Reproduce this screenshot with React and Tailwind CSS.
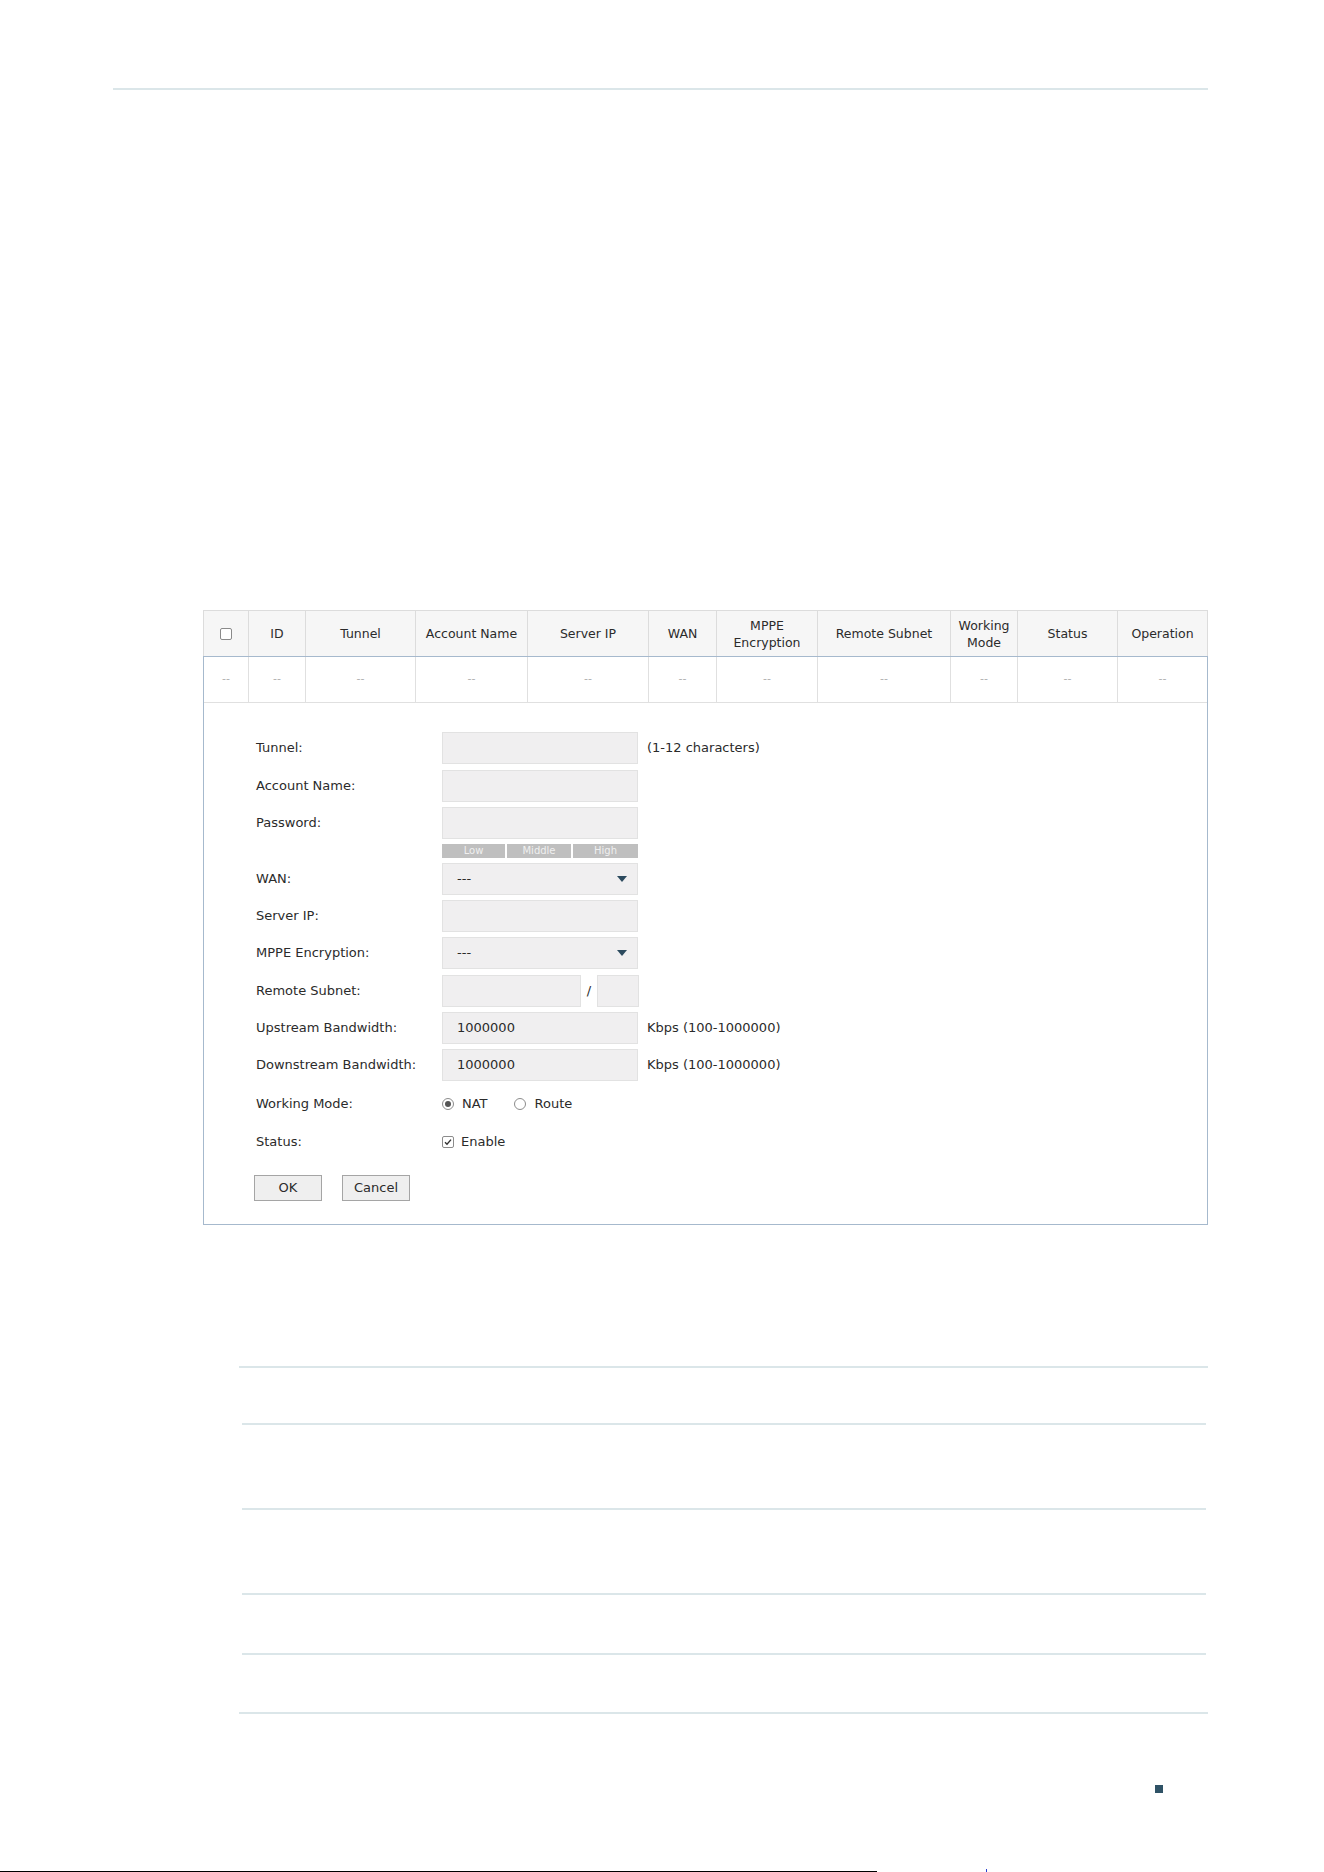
import React from 'react';

const font = "font-['DejaVu_Sans','Liberation_Sans',sans-serif]";

const headCells = [
  { w: 'w-[45px]', label: null },
  { w: 'w-[57px]', label: 'ID' },
  { w: 'w-[110px]', label: 'Tunnel' },
  { w: 'w-[112px]', label: 'Account Name' },
  { w: 'w-[121px]', label: 'Server IP' },
  { w: 'w-[68px]', label: 'WAN' },
  { w: 'w-[101px]', label: ['MPPE', 'Encryption'] },
  { w: 'w-[133px]', label: 'Remote Subnet' },
  { w: 'w-[67px]', label: ['Working', 'Mode'] },
  { w: 'w-[100px]', label: 'Status' },
  { w: 'flex-1', label: 'Operation' },
];

const Box = ({ className = 'w-[196px]', children }) => (
  <div className={`h-[32px] border border-[#e2e2e2] bg-[#f0eff0] flex items-center ${className}`}>
    {children}
  </div>
);

const Select = () => (
  <Box>
    <span className="pl-[14px] flex-1 text-[#2b2b2b]">---</span>
    <svg width="10" height="6" viewBox="0 0 10 6" className="mr-[10px]">
      <path d="M0 0h10L5 6z" fill="#2c4a5e" />
    </svg>
  </Box>
);

const Row = ({ label, top, children }) => (
  <div className={`flex items-center h-[32px] ${top}`}>
    <div className="w-[186px] text-[#2b2b2b]">{label}</div>
    {children}
  </div>
);

const Radio = ({ on }) => (
  <span className="w-[12px] h-[12px] rounded-full border border-[#8c8c8c] bg-white flex items-center justify-center">
    {on && <span className="w-[6px] h-[6px] rounded-full bg-[#555]" />}
  </span>
);

const Btn = ({ children }) => (
  <button className="w-[68px] h-[26px] border border-[#a5a5a5] bg-[#efefef] text-[#2b2b2b]">{children}</button>
);

const Rule = ({ className }) => <div className={`h-[2px] bg-[#dbe6e9] ${className}`} />;

export default function App() {
  return (
    <div className={`relative w-[1324px] h-[1872px] bg-white flex flex-col ${font}`}>
      <Rule className="mt-[88px] ml-[113px] w-[1095px]" />

      {/* tunnel list */}
      <div className="mt-[520px] ml-[203px] w-[1005px]">
        <div className="flex h-[46px] border border-b-0 border-[#dcdcdc] bg-[#f6f6f6] text-[12.5px] text-[#2b2b2b] leading-[17px]">
          {headCells.map((c, i) => (
            <div
              key={i}
              className={`${c.w} flex flex-col items-center justify-center text-center ${i < headCells.length - 1 ? 'border-r border-[#dcdcdc]' : ''}`}
            >
              {c.label === null ? (
                <span className="w-[12px] h-[12px] border border-[#8a8a8a] rounded-[2px] bg-white" />
              ) : Array.isArray(c.label) ? (
                c.label.map((l) => <span key={l}>{l}</span>)
              ) : (
                c.label
              )}
            </div>
          ))}
        </div>

        <div className="border border-[#a6b9cd]">
          <div className="flex h-[46px] border-b border-[#e0e0e0] text-[11px] text-[#b0b0b0]">
            {headCells.map((c, i) => (
              <div
                key={i}
                className={`${c.w} flex items-center justify-center ${i < headCells.length - 1 ? 'border-r border-[#e0e0e0]' : ''}`}
              >
                --
              </div>
            ))}
          </div>

          {/* add / edit form */}
          <div className="pt-[29px] pb-[23px] pl-[52px] text-[13px]">
            <Row label="Tunnel:" top="mt-0">
              <Box />
              <span className="ml-[9px] text-[#2b2b2b]">(1-12 characters)</span>
            </Row>
            <Row label="Account Name:" top="mt-[6px]">
              <Box />
            </Row>
            <Row label="Password:" top="mt-[5px]">
              <Box />
            </Row>
            <div className="flex mt-[5px]">
              <div className="w-[186px]" />
              <div className="flex w-[196px] h-[14px] gap-[2px] text-[10px] leading-[14px] text-[#f0f0f0]">
                <span className="w-[63px] bg-[#bfbfbf] text-center">Low</span>
                <span className="w-[64px] bg-[#bfbfbf] text-center">Middle</span>
                <span className="flex-1 bg-[#bfbfbf] text-center">High</span>
              </div>
            </div>
            <Row label="WAN:" top="mt-[5px]">
              <Select />
            </Row>
            <Row label="Server IP:" top="mt-[5px]">
              <Box />
            </Row>
            <Row label="MPPE Encryption:" top="mt-[5px]">
              <Select />
            </Row>
            <Row label="Remote Subnet:" top="mt-[6px]">
              <Box className="w-[139px]" />
              <span className="w-[16px] text-center text-[#2b2b2b]">/</span>
              <Box className="w-[42px]" />
            </Row>
            <Row label="Upstream Bandwidth:" top="mt-[5px]">
              <Box>
                <span className="pl-[14px] text-[#2b2b2b]">1000000</span>
              </Box>
              <span className="ml-[9px] text-[#2b2b2b]">Kbps (100-1000000)</span>
            </Row>
            <Row label="Downstream Bandwidth:" top="mt-[5px]">
              <Box>
                <span className="pl-[14px] text-[#2b2b2b]">1000000</span>
              </Box>
              <span className="ml-[9px] text-[#2b2b2b]">Kbps (100-1000000)</span>
            </Row>
            <Row label="Working Mode:" top="mt-[7px]">
              <div className="flex items-center text-[#2b2b2b]">
                <Radio on />
                <span className="ml-[8px]">NAT</span>
                <span className="ml-[26px]"><Radio /></span>
                <span className="ml-[9px]">Route</span>
              </div>
            </Row>
            <Row label="Status:" top="mt-[6px]">
              <div className="flex items-center text-[#2b2b2b]">
                <span className="w-[12px] h-[12px] border border-[#8c8c8c] rounded-[2px] bg-white flex items-center justify-center">
                  <svg width="8" height="8" viewBox="0 0 8 8">
                    <path d="M1 4.2l2 2 4-4.6" stroke="#333" strokeWidth="1.4" fill="none" />
                  </svg>
                </span>
                <span className="ml-[7px]">Enable</span>
              </div>
            </Row>
            <div className="flex gap-[20px] mt-[17px] -ml-[2px]">
              <Btn>OK</Btn>
              <Btn>Cancel</Btn>
            </div>
          </div>
        </div>
      </div>

      {/* parameter rows */}
      <Rule className="mt-[141px] ml-[239px] w-[969px]" />
      <Rule className="mt-[55px] ml-[242px] w-[964px]" />
      <Rule className="mt-[83px] ml-[242px] w-[964px]" />
      <Rule className="mt-[83px] ml-[242px] w-[964px]" />
      <Rule className="mt-[58px] ml-[242px] w-[964px]" />
      <Rule className="mt-[57px] ml-[239px] w-[969px]" />

      <div className="mt-[71px] ml-[1155px] w-[8px] h-[8px] bg-[#2f5266]" />

      <div className="mt-auto flex items-end h-[4px]">
        <div className="w-[877px] h-[1px] bg-black" />
        <div className="ml-[109px] w-[1px] h-[3px] bg-[#2a3ed0]" />
      </div>
    </div>
  );
}
